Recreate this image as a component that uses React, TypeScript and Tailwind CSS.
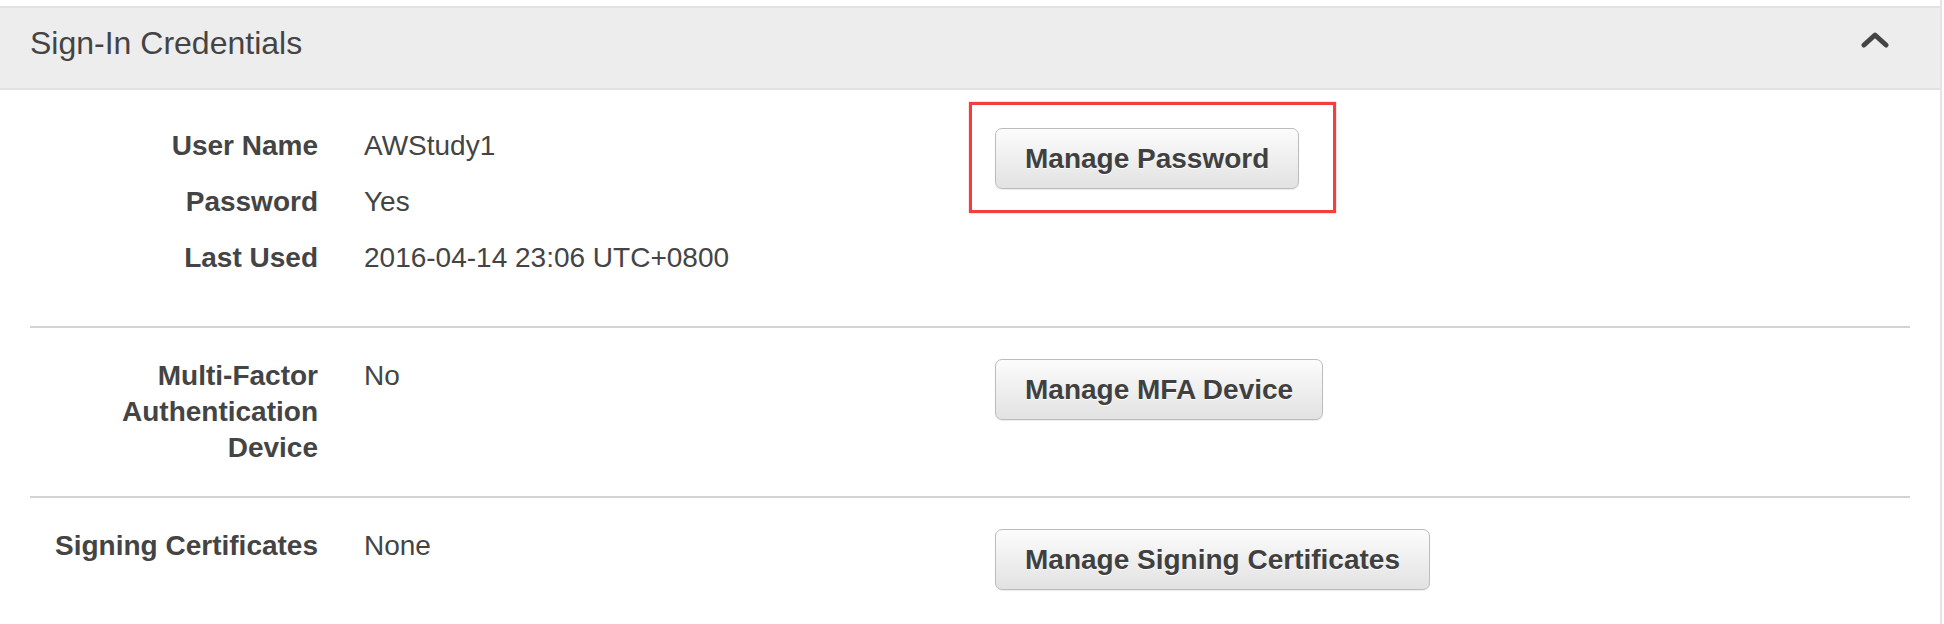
import React from 'react';

const font = "font-['Liberation_Sans',Arial,sans-serif]";

function Button({ label }: { label: string }) {
  return (
    <button className="h-[61px] px-[29px] rounded-[7px] border border-[#bcbcbc] bg-gradient-to-b from-[#fcfcfc] to-[#e2e2e2] shadow-[0_1px_1px_rgba(0,0,0,0.08)] text-[28px] leading-[36px] font-bold text-[#404040] whitespace-nowrap [text-shadow:0_1px_0_#fff]">
      {label}
    </button>
  );
}

function Row({ label, value }: { label: React.ReactNode; value: string }) {
  return (
    <>
      <div className="text-right font-bold">{label}</div>
      <div>{value}</div>
    </>
  );
}

export default function App() {
  return (
    <div className={`${font} w-[1942px] h-[624px] overflow-hidden bg-white border-r-2 border-[#e4e4e4] pt-[6px] text-[#444] text-[28px] leading-[36px]`}>
      {/* panel header */}
      <div className="h-[84px] bg-[#ededed] border-y-2 border-[#e1e1e1] flex justify-between pl-[30px] pr-[51px] pt-[15px]">
        <h2 className="text-[32px] leading-[40px] font-normal text-[#444]">Sign-In Credentials</h2>
        <svg width="28" height="16" viewBox="0 0 28 16" className="mt-[9px]">
          <polyline points="3,13 14,3 25,13" fill="none" stroke="#444" strokeWidth="5" strokeLinecap="round" strokeLinejoin="round" />
        </svg>
      </div>

      {/* user name / password */}
      <div className="mx-[30px] flex pt-[38px] pb-[50px] border-b-2 border-[#d2d2d2]">
        <div className="w-[965px] grid grid-cols-[288px_1fr] gap-x-[46px] gap-y-[20px]">
          <Row label="User Name" value="AWStudy1" />
          <Row label="Password" value="Yes" />
          <Row label="Last Used" value="2016-04-14 23:06 UTC+0800" />
        </div>
        <div className="relative self-start">
          <div className="absolute -left-[26px] -top-[26px] -right-[37px] -bottom-[24px] border-[3px] border-[#f43d3d] shadow-[0_0_1px_rgba(255,60,60,0.8)]" />
          <Button label="Manage Password" />
        </div>
      </div>

      {/* mfa */}
      <div className="mx-[30px] flex pt-[30px] pb-[30px] border-b-2 border-[#d2d2d2]">
        <div className="w-[965px] grid grid-cols-[288px_1fr] gap-x-[46px]">
          <Row label={<>Multi-Factor<br />Authentication<br />Device</>} value="No" />
        </div>
        <div className="self-start pt-[1px]">
          <Button label="Manage MFA Device" />
        </div>
      </div>

      {/* signing certificates */}
      <div className="mx-[30px] flex pt-[30px]">
        <div className="w-[965px] grid grid-cols-[288px_1fr] gap-x-[46px]">
          <Row label="Signing Certificates" value="None" />
        </div>
        <div className="self-start pt-[1px]">
          <Button label="Manage Signing Certificates" />
        </div>
      </div>
    </div>
  );
}
